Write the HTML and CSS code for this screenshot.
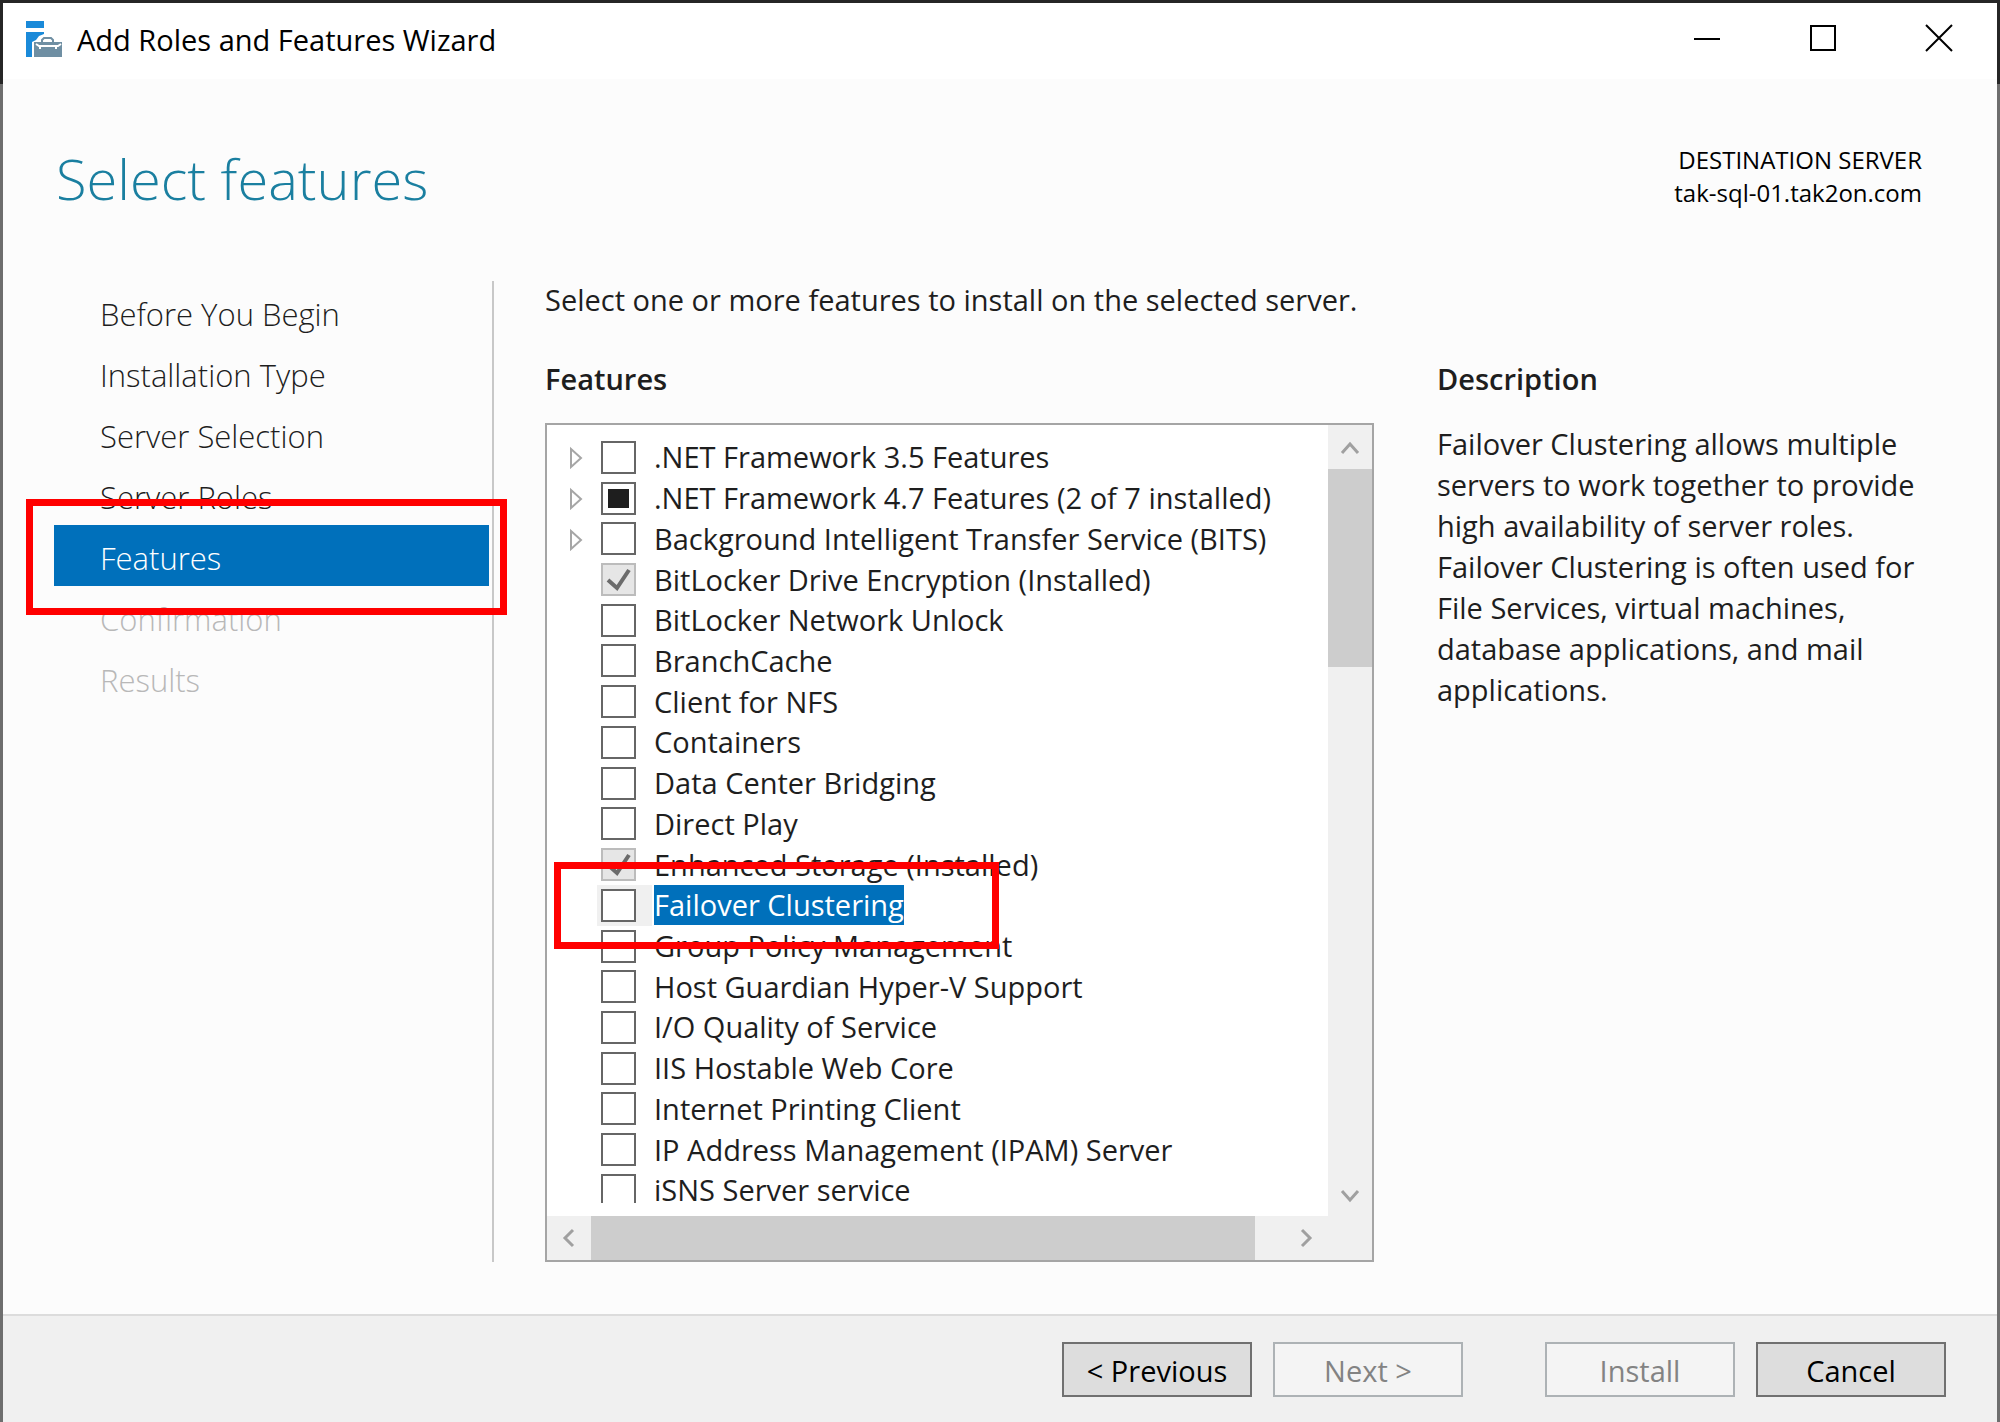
FILE: index.html
```
<!DOCTYPE html>
<html lang="en">
<head>
    <meta charset="UTF-8">
    <meta name="viewport" content="width=device-width, initial-scale=1.0">
    <title>Add Roles and Features Wizard</title>
    <link rel="stylesheet" href="styles.css">
</head>
<body>

<div class="window">
    <header class="titlebar">
        <svg class="app-icon" viewBox="0 0 36 36">
            <path fill="#1a8ad9" d="M0 0h18v7H0zM0 11h18v2l-5 2-3 4-4 2v15H0z"/>
            <path fill="#6f8fa3" d="M8 21h28v15H8z"/>
            <path fill="none" stroke="#6f8fa3" stroke-width="2" d="M16 21v-2l2-2h7l2 2v2"/>
            <path fill="none" stroke="#fff" stroke-width="2" d="M10 23l3 2h19l3-2M14 25v3M30 25v3"/>
        </svg>
        <span class="titlebar-text">Add Roles and Features Wizard</span>
        <div class="window-controls">
            <button class="control" aria-label="Minimize">
                <svg viewBox="0 0 28 28"><path d="M1 15h26"/></svg>
            </button>
            <button class="control" aria-label="Maximize">
                <svg viewBox="0 0 28 28"><path d="M2 2h24v24H2z"/></svg>
            </button>
            <button class="control" aria-label="Close">
                <svg viewBox="0 0 28 28"><path d="M1 1l26 26M27 1L1 27"/></svg>
            </button>
        </div>
    </header>

    <div class="page-header">
        <h1>Select features</h1>
        <div class="destination">
            <div>DESTINATION SERVER</div>
            <div>tak-sql-01.tak2on.com</div>
        </div>
    </div>

    <div class="content">
        <nav class="steps">
            <a class="step" href="#">Before You Begin</a>
            <a class="step" href="#">Installation Type</a>
            <a class="step" href="#">Server Selection</a>
            <a class="step" href="#">Server Roles</a>
            <a class="step active" href="#">Features<span class="highlight step-highlight"></span></a>
            <a class="step disabled">Confirmation</a>
            <a class="step disabled">Results</a>
        </nav>

        <main class="features">
            <p class="intro">Select one or more features to install on the selected server.</p>
            <h2>Features</h2>
            <div class="tree-box">
                <ul class="tree">
                    <li><button class="expander" aria-label="Expand"><svg viewBox="0 0 16 24"><path d="M4 4v18l10-9z"/></svg></button><input type="checkbox" id="f1"><label for="f1">.NET Framework 3.5 Features</label></li>
                    <li><button class="expander" aria-label="Expand"><svg viewBox="0 0 16 24"><path d="M4 4v18l10-9z"/></svg></button><input type="checkbox" id="f2" class="partial"><label for="f2">.NET Framework 4.7 Features (2 of 7 installed)</label></li>
                    <li><button class="expander" aria-label="Expand"><svg viewBox="0 0 16 24"><path d="M4 4v18l10-9z"/></svg></button><input type="checkbox" id="f3"><label for="f3">Background Intelligent Transfer Service (BITS)</label></li>
                    <li><span class="check-wrap"><input type="checkbox" id="f4" checked disabled><svg class="tick" viewBox="0 0 35 33"><path d="M7 17l9 8L28 7"/></svg></span><label for="f4">BitLocker Drive Encryption (Installed)</label></li>
                    <li><input type="checkbox" id="f5"><label for="f5">BitLocker Network Unlock</label></li>
                    <li><input type="checkbox" id="f6"><label for="f6">BranchCache</label></li>
                    <li><input type="checkbox" id="f7"><label for="f7">Client for NFS</label></li>
                    <li><input type="checkbox" id="f8"><label for="f8">Containers</label></li>
                    <li><input type="checkbox" id="f9"><label for="f9">Data Center Bridging</label></li>
                    <li><input type="checkbox" id="f10"><label for="f10">Direct Play</label></li>
                    <li><span class="check-wrap"><input type="checkbox" id="f11" checked disabled><svg class="tick" viewBox="0 0 35 33"><path d="M7 17l9 8L28 7"/></svg></span><label for="f11">Enhanced Storage (Installed)</label></li>
                    <li class="selected"><input type="checkbox" id="f12"><label for="f12">Failover Clustering</label><span class="highlight feature-highlight"></span></li>
                    <li><input type="checkbox" id="f13"><label for="f13">Group Policy Management</label></li>
                    <li><input type="checkbox" id="f14"><label for="f14">Host Guardian Hyper-V Support</label></li>
                    <li><input type="checkbox" id="f15"><label for="f15">I/O Quality of Service</label></li>
                    <li><input type="checkbox" id="f16"><label for="f16">IIS Hostable Web Core</label></li>
                    <li><input type="checkbox" id="f17"><label for="f17">Internet Printing Client</label></li>
                    <li><input type="checkbox" id="f18"><label for="f18">IP Address Management (IPAM) Server</label></li>
                    <li class="cut"><input type="checkbox" id="f19"><label for="f19">iSNS Server service</label></li>
                </ul>
                <div class="scrollbar vertical">
                    <button class="arrow" aria-label="Scroll up"><svg viewBox="0 0 20 20"><path d="M2 16l8-9 8 9"/></svg></button>
                    <div class="thumb"></div>
                    <button class="arrow" aria-label="Scroll down"><svg viewBox="0 0 20 20"><path d="M2 7l8 9 8-9"/></svg></button>
                </div>
                <div class="scrollbar horizontal">
                    <button class="arrow" aria-label="Scroll left"><svg viewBox="0 0 20 20"><path d="M14 2l-8 8 8 8"/></svg></button>
                    <div class="thumb"></div>
                    <button class="arrow" aria-label="Scroll right"><svg viewBox="0 0 20 20"><path d="M6 2l8 8-8 8"/></svg></button>
                </div>
                <div class="corner"></div>
            </div>
        </main>

        <aside class="description">
            <h2>Description</h2>
            <p>Failover Clustering allows multiple servers to work together to provide high availability of server roles. Failover Clustering is often used for File Services, virtual machines, database applications, and mail applications.</p>
        </aside>
    </div>

    <footer class="footer">
        <button class="btn">&lt; Previous</button>
        <button class="btn" disabled>Next &gt;</button>
        <button class="btn install" disabled>Install</button>
        <button class="btn">Cancel</button>
    </footer>
</div>

</body>
</html>
```
FILE: styles.css
```
* {
    box-sizing: border-box;
}

body {
    margin: 0;
    padding: 3px 3px 0;
    min-height: 100vh;
    display: flex;
    background: linear-gradient(#262626 0 84px, #6e6e6e 84px);
    font-family: "Open Sans", sans-serif;
    font-size: 29px;
    color: #1e1e1e;
}

h1, h2, p, ul {
    margin: 0;
    padding: 0;
    font-weight: 400;
}

button, input {
    margin: 0;
    padding: 0;
    font: inherit;
    color: inherit;
}

.window {
    flex: 1;
    display: flex;
    flex-direction: column;
    background: #fcfcfc;
}

/* Title bar */
.titlebar {
    display: flex;
    align-items: center;
    height: 76px;
    padding: 0 0 4px 23px;
    background: #fff;
    color: #000;
}

.app-icon {
    width: 36px;
    height: 36px;
    margin-right: 15px;
}

.window-controls {
    display: flex;
    margin-left: auto;
}

.control {
    width: 116px;
    height: 72px;
    padding-top: 2px;
    border: none;
    background: none;
}

.control svg {
    width: 28px;
    height: 28px;
    fill: none;
    stroke: #000;
    stroke-width: 2;
}

/* Page heading */
.page-header {
    display: flex;
    justify-content: space-between;
    height: 202px;
    padding: 60px 75px 0 53px;
}

h1 {
    font-size: 56px;
    font-weight: 300;
    line-height: 78px;
    color: #1a7fa0;
}

.destination {
    padding-top: 4px;
    font-size: 24px;
    line-height: 33px;
    text-align: right;
    color: #000;
}

/* Wizard body */
.content {
    flex: 1;
    display: flex;
    padding: 0 50px 52px 51px;
}

.steps {
    width: 440px;
    border-right: 2px solid #c8c8c8;
}

.step {
    position: relative;
    display: block;
    width: 435px;
    height: 61px;
    padding-left: 46px;
    font-size: 31px;
    font-weight: 300;
    line-height: 66px;
    color: #1e1e1e;
    text-decoration: none;
}

.step.active {
    background: #0070bb;
    color: #fff;
}

.step.disabled {
    color: #b8b8b8;
}

/* Red frames drawn over the selected items */
.highlight {
    position: absolute;
    z-index: 1;
    border: 7px solid #f00;
    pointer-events: none;
}

.step-highlight {
    inset: -26px -18px -29px -28px;
}

.features {
    flex: 829;
    display: flex;
    flex-direction: column;
    margin-left: 51px;
}

.intro {
    line-height: 38px;
}

h2 {
    font-size: 29px;
    font-weight: 600;
    line-height: 40px;
}

.features h2 {
    margin: 40px 0 24px;
}

.tree-box {
    flex: 1;
    display: grid;
    grid-template-columns: 1fr 44px;
    grid-template-rows: 1fr 44px;
    border: 2px solid #a5a5a5;
    background: #fff;
}

.tree {
    display: grid;
    grid-template-rows: repeat(18, 1fr) 33px;
    padding: 12px 0 13px 20px;
    list-style: none;
}

.tree li {
    position: relative;
    display: flex;
    align-items: center;
    min-height: 0;
    padding-left: 34px;
}

.expander {
    width: 20px;
    height: 24px;
    margin-left: -34px;
    margin-right: 14px;
    border: none;
    background: none;
    text-align: left;
    line-height: 0;
}

.expander svg {
    width: 16px;
    height: 24px;
    fill: none;
    stroke: #a6a6a6;
    stroke-width: 2;
}

.tree input {
    appearance: none;
    flex: none;
    display: block;
    width: 35px;
    height: 33px;
    border: 2px solid #666;
    background: #fff;
}

.tree input.partial {
    background: linear-gradient(#1e1e1e, #1e1e1e) center / 21px 19px no-repeat #fff;
}

.tree input:disabled {
    border-color: #bcbcbc;
    background: #e6e6e6;
}

.check-wrap {
    display: grid;
}

.check-wrap > * {
    grid-area: 1 / 1;
}

.tick {
    width: 35px;
    height: 33px;
    fill: none;
    stroke: #6b6b6b;
    stroke-width: 4;
}

.tree label {
    margin-left: 18px;
    line-height: 40px;
    white-space: nowrap;
}

.tree li.selected label {
    z-index: 1;
    background: #0070bb;
    color: #fff;
}

.selected input {
    box-shadow: 12px 0 0 4px #f0f0f0, 0 0 0 4px #f0f0f0;
}

.feature-highlight {
    left: -13px;
    top: -23px;
    width: 445px;
    height: 87px;
}

/* Last row is only partly scrolled into view */
.tree li.cut {
    align-items: flex-start;
}

.cut input {
    height: 29px;
    margin-top: 4px;
    border-bottom: none;
}

/* Scrollbars */
.scrollbar {
    display: flex;
    background: #f0f0f0;
}

.vertical {
    flex-direction: column;
}

.arrow {
    flex: none;
    width: 44px;
    height: 44px;
    border: none;
    background: none;
    line-height: 0;
}

.arrow svg {
    width: 20px;
    height: 20px;
    fill: none;
    stroke: #a0a0a0;
    stroke-width: 3;
}

.arrow:last-child {
    margin-top: auto;
}

.horizontal .arrow:last-child {
    margin: 0 0 0 auto;
}

.thumb {
    background: #cdcdcd;
}

.vertical .thumb {
    height: 25%;
}

.horizontal .thumb {
    width: 85%;
}

.corner {
    background: #f0f0f0;
}

.description {
    flex: 510;
    margin-left: 63px;
    padding-top: 78px;
}

.description h2 {
    margin-bottom: 24px;
}

.description p {
    line-height: 41px;
}

/* Footer buttons */
.footer {
    display: flex;
    justify-content: flex-end;
    gap: 21px;
    padding: 26px 51px 25px;
    border-top: 2px solid #dcdcdc;
    background: #f0f0f0;
}

.btn {
    width: 190px;
    height: 55px;
    padding-top: 1px;
    border: 2px solid #707070;
    background: #ddd;
    color: #000;
}

.btn:disabled {
    border-color: #adb2b5;
    background: #f4f4f4;
    color: #838383;
}

.install {
    margin-left: 61px;
}
```
